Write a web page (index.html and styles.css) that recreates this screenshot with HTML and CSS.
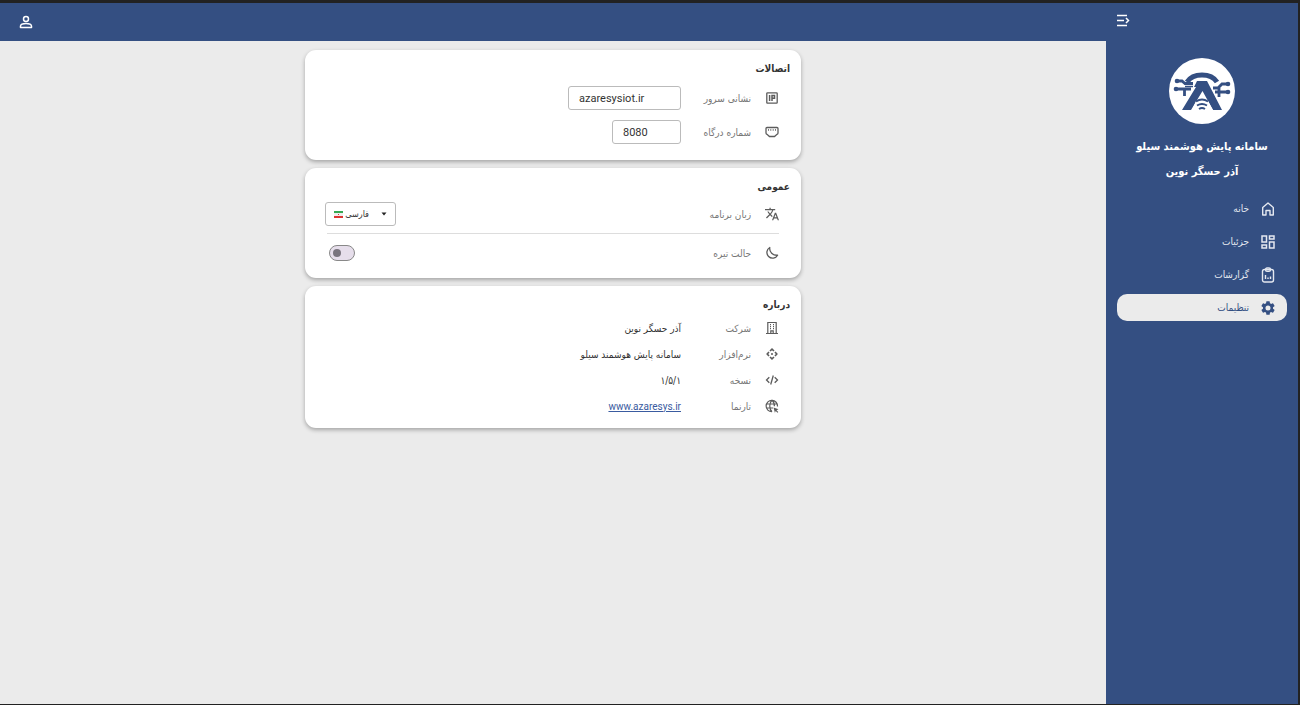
FILE: index.html
```html
<!DOCTYPE html>
<html lang="fa" dir="rtl">
<head>
<meta charset="utf-8">
<title>تنظیمات</title>
<link rel="stylesheet" href="styles.css">
</head>
<body>
<div class="app">
  <aside class="sidebar">
    <button class="icon-button collapse" aria-label="منو">
      <svg width="14" height="14" viewBox="0 0 14 14" fill="none" stroke="currentColor" stroke-width="1.5"><path d="M0 2.500h10M0 7.500h7M0 12.500h10M9 5l2.500 2.500L9 10"/></svg>
    </button>
    <svg class="logo" viewBox="0 0 66 66" role="img" aria-label="آذر حسگر نوین">
      <circle cx="33" cy="33" r="33" fill="#fff"/>
      <g fill="none" stroke="#344f82">
        <path d="M18 24C24 14.500 42 14.500 48 24" stroke-width="5"/>
        <path d="M8 23h5l3 2.500h8M7 31h15M15.500 31v7M59 26h-6l-4 4h-5M59 34H46M50 30v9" stroke-width="2.800"/>
        <path d="M16 28.500h8" stroke-width="1.500"/>
      </g>
      <g fill="#344f82">
        <circle cx="8" cy="23" r="2.300"/><circle cx="7" cy="31" r="2.300"/><circle cx="59" cy="26" r="2.300"/><circle cx="59" cy="34" r="2.300"/>
        <path d="M28 23h10l15 29h-9L33.500 33 22 52h-9l14-23h-2z" stroke="#fff" stroke-width="1.500" paint-order="stroke"/>
      </g>
      <path d="M23 52l4-9h12l5 9z" fill="#fff"/>
      <path d="M27 43.500q6-4 12 0M28 47.500q5-3 10 0M30 51q3-2 6 0" fill="none" stroke="#344f82" stroke-width="1.900"/>
    </svg>
    <h1 class="brand">سامانه پایش هوشمند سیلو<br>آذر حسگر نوین</h1>
    <nav class="nav">
      <a class="nav-item" href="#"><svg width="14" height="14" viewBox="0 0 14 14" fill="none" stroke="currentColor" stroke-width="1.400"><path d="M1.700 5.500 7 1l5.300 4.500V13H9V8.500H5V13H1.700z" stroke-linejoin="round"/></svg>خانه</a>
      <a class="nav-item" href="#"><svg width="14" height="14" viewBox="0 0 14 14" fill="none" stroke="currentColor" stroke-width="1.500"><path d="M1 1h4.500v6H1zM8.500 1H13v3H8.500zM1 10h4.500v3H1zM8.500 7H13v6H8.500z"/></svg>جزئیات</a>
      <a class="nav-item" href="#"><svg width="14" height="16" viewBox="0 0 14 16" fill="none" stroke="currentColor" stroke-width="1.400"><rect x="1.500" y="2.500" width="11" height="12.500" rx="2"/><rect x="4.500" y="1" width="5" height="3.300" rx="1.500"/><path d="M4.500 8v4M7 10.500V12M9.500 9.500V12"/></svg>گزارشات</a>
      <a class="nav-item active" href="#" aria-current="page"><svg width="14" height="14" viewBox="2 2 20 20" fill="currentColor"><path d="M19.140 12.940c.04-.3.06-.61.06-.94s-.02-.64-.07-.94l2.030-1.580a.49.49 0 0 0 .12-.61l-1.920-3.320a.49.49 0 0 0-.59-.22l-2.390.96a7 7 0 0 0-1.620-.94l-.36-2.540a.48.48 0 0 0-.48-.41h-3.840a.48.48 0 0 0-.47.41l-.36 2.540a7 7 0 0 0-1.620.94l-2.390-.96a.48.48 0 0 0-.59.22L2.740 8.870a.47.47 0 0 0 .12.61l2.030 1.580a6 6 0 0 0 0 1.880l-2.030 1.580a.49.49 0 0 0-.12.61l1.920 3.320c.12.22.37.29.59.22l2.390-.96c.5.380 1.030.7 1.620.94l.36 2.540c.05.24.24.41.48.41h3.840c.24 0 .44-.17.47-.41l.36-2.540a7 7 0 0 0 1.620-.94l2.390.96c.22.080.47 0 .59-.22l1.920-3.320a.47.47 0 0 0-.12-.61zM12 15.600a3.600 3.600 0 1 1 0-7.200 3.600 3.600 0 0 1 0 7.200z"/></svg>تنظیمات</a>
    </nav>
  </aside>

  <div class="page">
    <header class="topbar">
      <button class="icon-button" aria-label="حساب کاربری">
        <svg width="14" height="14" viewBox="0 0 14 14" fill="none" stroke="currentColor" stroke-width="1.500"><circle cx="7" cy="4" r="2.500"/><path d="M1.500 12.500v-1.500C2 7.800 12 7.800 12.500 11v1.500z" stroke-linejoin="round"/></svg>
      </button>
    </header>
    <main class="content">
      <section class="card">
        <h2>اتصالات</h2>
        <div class="fields">
          <div class="row">
            <svg class="icon" viewBox="0 0 14 14" fill="none" stroke="currentColor" stroke-width="1.300"><rect x="1.800" y="1.800" width="10.400" height="10.400" rx=".7"/><path d="M4.600 4v6M7 10V4.500h2.500v2.700H7" stroke-width="1.500"/></svg>
            <label for="server">نشانی سرور</label>
            <input class="text server" id="server" dir="ltr" value="azaresysiot.ir">
          </div>
          <div class="row">
            <svg class="icon" viewBox="0 0 14 14" fill="none" stroke="currentColor" stroke-width="1.300"><path d="M2 2.500h10q1 0 1 1v4.500q0 1-1 1.300L9.500 11.500h-5L2 9.300Q1 9 1 8V3.500q0-1 1-1z"/><path d="M3.500 4.200v1.500M5.800 4.200v1.500M8.200 4.200v1.500M10.500 4.200v1.500" stroke-width="1"/></svg>
            <label for="port">شماره درگاه</label>
            <input class="text port" id="port" dir="ltr" value="8080">
          </div>
        </div>
      </section>

      <section class="card general">
        <h2>عمومی</h2>
        <div class="row">
          <svg class="icon" viewBox="1 2 22 20" fill="currentColor"><path d="M12.870 15.070l-2.540-2.510.03-.03A17.500 17.500 0 0 0 14.070 6H17V4h-7V2H8v2H1v2h11.170C11.500 7.920 10.440 9.750 9 11.350 8.070 10.320 7.300 9.190 6.690 8h-2c.73 1.630 1.730 3.170 2.980 4.560l-5.090 5.020L4 19l5-5 3.110 3.110zM18.500 10h-2L12 22h2l1.120-3h4.750L21 22h2zm-2.620 7l1.620-4.330L19.120 17z"/></svg>
          <label for="lang">زبان برنامه</label>
          <div class="select">
            <svg width="6" height="4" viewBox="0 0 6 4"><path d="M.5.500h5L3 3.500z" fill="#222"/></svg>
            <select id="lang"><option>فارسی</option></select>
            <svg width="9" height="7" viewBox="0 0 9 7"><path fill="#eee" d="M0 0h9v7H0z"/><path fill="#35a852" d="M0 0h9v2H0z"/><path fill="#dd3432" d="M0 5h9v2H0zM4 3h1v1H4z"/></svg>
          </div>
        </div>
        <hr>
        <div class="row">
          <svg class="icon" viewBox="0 0 14 14" fill="none" stroke="currentColor" stroke-width="1.300"><path d="M4.800 1.500C4 6 8 9.700 12.600 9.200A5.700 5.700 0 1 1 4.800 1.500z" stroke-linejoin="round"/></svg>
          <label for="dark">حالت تیره</label>
          <input class="switch" id="dark" type="checkbox" role="switch">
        </div>
      </section>

      <section class="card about">
        <h2>درباره</h2>
        <div class="row">
          <svg class="icon" viewBox="0 0 14 14" fill="none" stroke="currentColor" stroke-width="1.200"><path d="M1 12.500h12M2.800 12.500V1.500h8.400v11M5.800 12.500V9.800h2.400v2.700"/><path d="M5 3.700h1M8 3.700h1M5 5.700h1M8 5.700h1M5 7.700h1M8 7.700h1"/></svg>
          <span class="label">شرکت</span><span>آذر حسگر نوین</span>
        </div>
        <div class="row">
          <svg class="icon" viewBox="0 0 14 14" fill="none" stroke="currentColor" stroke-width="1.600"><path d="M5 4 7 2.200 9 4M5 10l2 1.800L9 10M4 5 2.200 7 4 9M10 5l1.800 2L10 9"/><circle cx="7" cy="7" r="1" fill="currentColor" stroke="none"/></svg>
          <span class="label">نرم‌افزار</span><span>سامانه پایش هوشمند سیلو</span>
        </div>
        <div class="row">
          <svg class="icon" viewBox="0 0 14 14" fill="none" stroke="currentColor" stroke-width="1.300"><path d="M4.300 4.200 1.500 7l2.800 2.800M9.700 4.200 12.500 7 9.700 9.800M8.300 2.500 5.700 11.500"/></svg>
          <span class="label">نسخه</span><span>۱/۵/۱</span>
        </div>
        <div class="row">
          <svg class="icon" viewBox="0 0 14 14" fill="none" stroke="currentColor" stroke-width="1.200"><path d="M12.500 7.500A5.700 5.700 0 1 0 7 12.700M1.500 5h11M1.500 9H8M7 1.300C4 4 4 10 7 12.700M7 1.300c2 1.700 2.500 4 2.400 6"/><path d="M8.500 8.500l5 1.700-2 1 1.800 1.800-.8.800-1.800-1.800-.8 1.700z" fill="currentColor" stroke="none"/></svg>
          <span class="label">تارنما</span><a class="site" href="#" dir="ltr">www.azaresys.ir</a>
        </div>
      </section>
    </main>
  </div>
</div>
</body>
</html>
```
FILE: styles.css
```css
* { box-sizing: border-box; }

body {
  margin: 0;
  font-family: "DejaVu Sans Condensed", "DejaVu Sans", sans-serif;
  font-size: 10px;
  color: #333;
}

svg { flex: none; }

.app {
  display: flex;
  min-height: 100vh;
  background: #ebebeb;
  border: solid #222;
  border-width: 3px 2px 1px 0;
}

.sidebar {
  flex: 0 0 192px;
  display: flex;
  flex-direction: column;
  align-items: center;
  padding: 10px 11px;
  background: #344f82;
  color: #fff;
}

.icon-button {
  display: flex;
  padding: 0;
  border: 0;
  background: none;
  color: #fff;
}

.collapse { align-self: flex-end; }

.logo {
  width: 66px;
  margin-top: 31px;
}

.brand {
  margin: 10px 0 11px;
  font-size: 11px;
  line-height: 25px;
  text-align: center;
  white-space: nowrap;
}

.nav {
  align-self: stretch;
  display: grid;
  gap: 6px;
}

.nav-item {
  display: flex;
  align-items: center;
  gap: 12px;
  height: 27px;
  padding: 0 12px;
  border-radius: 10px;
  color: #e4e8f0;
  text-decoration: none;
}

.nav-item.active {
  background: #ebebeb;
  color: #344f82;
}

.page {
  flex: 1;
  min-width: 0;
}

.topbar {
  display: flex;
  align-items: center;
  justify-content: flex-end;
  height: 38px;
  padding: 0 19px;
  background: #344f82;
}

.content {
  display: grid;
  gap: 8px;
  max-width: 496px;
  margin: 9px auto;
}

.card {
  padding: 9px 22px 16px;
  border-radius: 11px;
  background: #fff;
  box-shadow: 0 2px 4px rgb(0 0 0 / 30%);
}

.card.general { padding-bottom: 13px; }
.card.about { padding-bottom: 9px; }

h2 {
  margin: 0 -11px;
  font-size: 10px;
  line-height: 20px;
}

.row {
  display: grid;
  grid-template-columns: 14px 70px 1fr;
  column-gap: 14px;
  align-items: center;
  justify-items: start;
  min-height: 24px;
}

.row > :nth-child(3) { margin-right: -14px; }

.about .row { min-height: 26px; }

.fields {
  display: grid;
  gap: 10px;
  padding-top: 7px;
}

.icon {
  width: 14px;
  height: 14px;
  color: #5c5c5c;
}

label, .label { color: #777; }

.text {
  height: 24px;
  padding: 0 10px;
  border: 1px solid #bbb;
  border-radius: 3px;
  background: #fff;
  color: #333;
  font: 11px Roboto, sans-serif;
}

.server { width: 113px; }
.port { width: 69px; }

.general .row { margin-top: 5px; }

.general .row > :nth-child(3) {
  justify-self: end;
}

.select {
  display: flex;
  align-items: center;
  justify-content: space-between;
  width: 71px;
  height: 24px;
  margin-left: -2px;
  padding: 0 8px;
  border: 1px solid #bbb;
  border-radius: 3px;
}

.select select {
  flex: 1;
  min-width: 0;
  margin: 0 12px 0 2px;
  padding: 0;
  border: 0;
  appearance: none;
  background: none;
  color: #333;
  font-family: inherit;
  font-size: 9px;
}

hr {
  height: 1px;
  margin: 7px 0;
  border: 0;
  background: #ddd;
}

.switch {
  appearance: none;
  display: flex;
  align-items: center;
  justify-content: flex-end;
  width: 26px;
  height: 16px;
  margin: 0 0 0 2px;
  padding: 0 3px;
  border: 1px solid #888;
  border-radius: 8px;
  background: #e6deeb;
}

.switch::before {
  content: "";
  width: 8px;
  height: 8px;
  border-radius: 50%;
  background: #79747e;
}

.site {
  color: #3a5ba0;
  font-family: Roboto, sans-serif;
}
```
